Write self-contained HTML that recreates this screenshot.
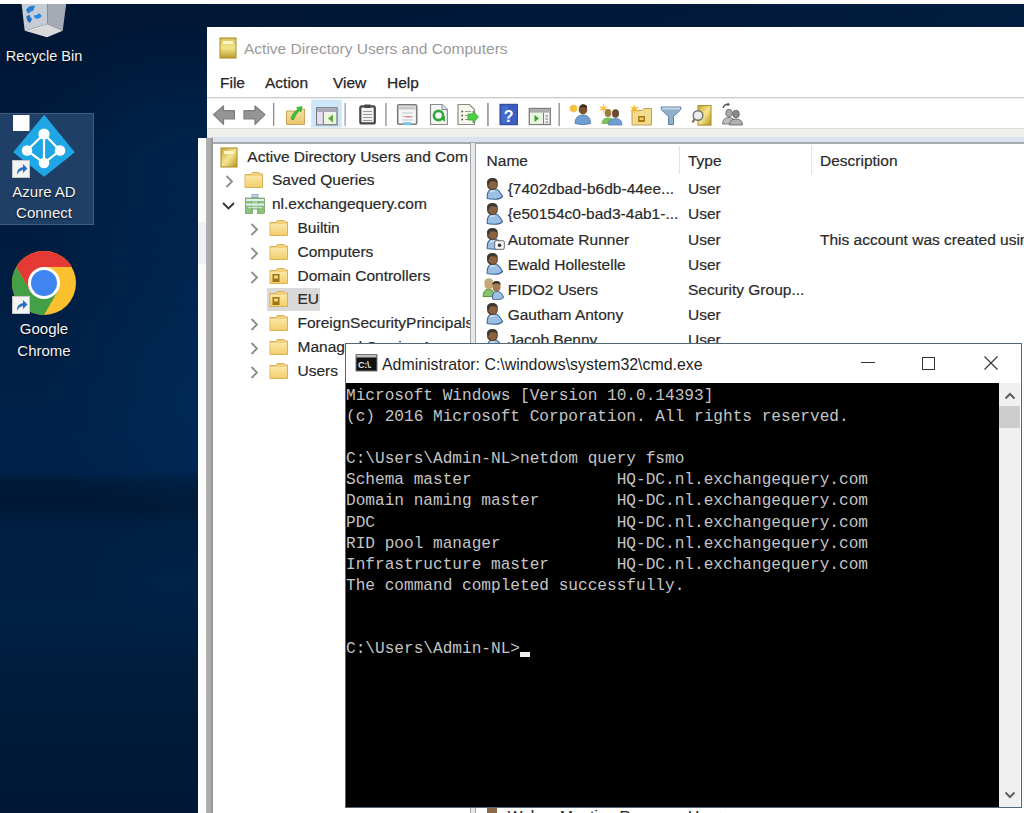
<!DOCTYPE html>
<html><head><meta charset="utf-8">
<style>
*{margin:0;padding:0;box-sizing:border-box}
html,body{width:1024px;height:813px;overflow:hidden}
body{position:relative;font-family:"Liberation Sans",sans-serif;background:#05193a}
.a{position:absolute}
#desk{left:0;top:0;width:1024px;height:813px;
 background:
  radial-gradient(ellipse 170px 140px at 210px 400px, rgba(0,50,100,0.5), rgba(0,50,100,0) 100%),
  radial-gradient(ellipse 160px 110px at 210px 290px, rgba(0,45,95,0.4), rgba(0,45,95,0) 100%),
  radial-gradient(ellipse 170px 150px at 190px 170px, rgba(0,45,95,0.5), rgba(0,45,95,0) 100%),
  radial-gradient(ellipse 100px 70px at 170px 580px, rgba(0,40,85,0.35), rgba(0,40,85,0) 100%),
  linear-gradient(180deg,#001634 0px,#001a3a 110px,#001d40 250px,#002046 360px,#00224b 470px,#001a37 484px,#001833 506px,#001e40 524px,#001f41 620px,#001b3a 720px,#001836 813px);}
#topstrip{left:0;top:0;width:1024px;height:4px;background:#fdfdfd}
.t{white-space:nowrap;line-height:20px}
.tr{font-size:15.5px;color:#2a2a2a;-webkit-text-stroke:0.2px #2a2a2a}
.con{font-family:"Liberation Mono",monospace;font-size:16.13px;line-height:21.1px;color:#c4c4c4;white-space:pre}
.menu{font-size:15.5px;color:#262626;-webkit-text-stroke:0.25px #262626}
.dtext{color:#f4f4f4;font-size:15px;text-align:center;text-shadow:0 1px 2px rgba(0,0,0,.9);line-height:22px}
</style></head><body>
<div id="desk" class="a"></div>
<div class="a" style="left:200px;top:0;width:824px;height:30px;background:linear-gradient(90deg,rgba(5,40,80,0) 0,rgba(5,40,80,0.35) 100%)"></div>
<div id="topstrip" class="a"></div>

<!-- Recycle bin -->
<svg class="a" style="left:20px;top:4px" width="50" height="36" viewBox="0 0 50 36">
 <path d="M1.6 0 L27.3 0 L27.3 20 L4.7 26.8 Z" fill="#c5ccd6"/>
 <path d="M27.3 0 L46.2 0 L42.7 26.8 L27.3 20 Z" fill="#a4abb4"/>
 <path d="M4.7 26.8 L27.3 20 L42.7 26.8 L27 33.3 Z" fill="#d9d9dc"/>
 <path d="M6 6 Q9 1 15 2 L13 7 Q10 6.5 8.5 10 Z" fill="#1f7fd6"/>
 <path d="M6.5 12 Q6 17 10 19 L12 15 Q9.5 13.5 10 11 Z" fill="#1a6fc8"/>
 <path d="M14.5 14 Q19 16 22 12 L19 9 Q17 12 14 11 Z" fill="#2a8ae0"/>
</svg>
<div class="a dtext" style="left:0;top:45px;width:88px;font-size:14.5px">Recycle Bin</div>

<!-- Azure AD selection -->
<div class="a" style="left:-1px;top:113px;width:95px;height:112px;background:#1f3f66;border:1px solid #3b5d86"></div>
<svg class="a" style="left:11px;top:113px" width="68" height="68" viewBox="0 0 68 68">
 <path d="M33.2 1.7 L63.8 39.2 L33.2 63.8 L2.2 39.2 Z" fill="#1fa6e4"/>
 <path d="M33 21 L33 50 M33 21 L16 37.5 L33 50 L49 37.5 Z" fill="none" stroke="#fff" stroke-width="2.2"/>
 <circle cx="33" cy="21" r="5.6" fill="#fff"/>
 <circle cx="16" cy="37.5" r="5.3" fill="#fff"/>
 <circle cx="49" cy="37.5" r="5.3" fill="#fff"/>
 <circle cx="33" cy="50" r="5.3" fill="#fff"/>
 <rect x="2" y="2" width="16.5" height="16" fill="#fff"/>
</svg>
<svg class="a" style="left:12px;top:160px" width="18" height="18" viewBox="0 0 18 18">
 <rect x=".5" y=".5" width="17" height="17" fill="#f4f4f4" stroke="#c8c8c8" stroke-width="1"/>
 <path d="M5 15 Q4.5 8 11 7 L11 4 L15.5 8.5 L11 13 L11 10 Q7 10.5 5 15 Z" fill="#2a6fc0"/>
</svg>
<div class="a dtext" style="left:0;top:181px;width:88px;line-height:21px">Azure AD<br>Connect</div>

<!-- Chrome -->
<svg class="a" style="left:11px;top:250px" width="66" height="66" viewBox="-33 -33 66 66">
 <defs><clipPath id="cc"><circle cx="0" cy="0" r="32"/></clipPath></defs>
 <circle cx="0" cy="0" r="32" fill="#fbc02d"/>
 <g clip-path="url(#cc)">
  <path d="M0 -16 L50 -16 L50 -62 L-54 -62 L-13.86 8 L0 0 Z" fill="#e53935"/>
  <path d="M-13.86 8 L-54 -62 L-62 80 L-26.14 77.3 L13.86 8 L0 0 Z" fill="#43a047"/>
 </g>
 <circle cx="0" cy="0" r="16" fill="#fff"/>
 <circle cx="0" cy="0" r="13" fill="#3f85f2"/>
</svg>
<svg class="a" style="left:12px;top:296px" width="18" height="18" viewBox="0 0 18 18">
 <rect x=".5" y=".5" width="17" height="17" fill="#f4f4f4" stroke="#c8c8c8" stroke-width="1"/>
 <path d="M5 15 Q4.5 8 11 7 L11 4 L15.5 8.5 L11 13 L11 10 Q7 10.5 5 15 Z" fill="#2a6fc0"/>
</svg>
<div class="a dtext" style="left:0;top:318px;width:88px">Google<br>Chrome</div>

<!-- ADUC window -->
<div id="aduc" class="a" style="left:207px;top:27px;width:817px;height:786px;background:#fff"></div>
<div class="a" style="left:198px;top:138px;width:9px;height:675px;background:#fdfdfd"></div>
<div class="a" style="left:198px;top:222px;width:8px;height:42px;background:#f0f1f3"></div>
<!-- title -->
<svg class="a" style="left:219px;top:37px" width="19" height="22" viewBox="0 0 19 22">
 <defs><linearGradient id="bk" x1="0" y1="0" x2="0" y2="1"><stop offset="0" stop-color="#d9c25a"/><stop offset=".5" stop-color="#f3e48c"/><stop offset="1" stop-color="#b89a2a"/></linearGradient></defs>
 <rect x="1" y="1" width="16" height="20" fill="url(#bk)" stroke="#a88a20" stroke-width="1"/>
 <rect x="4" y="4" width="10" height="3" fill="#fff6c8"/>
</svg>
<div class="a t" style="left:244px;top:39px;font-size:15.5px;color:#9a9a9a">Active Directory Users and Computers</div>
<!-- menu -->
<div class="a t menu" style="left:220px;top:73px">File</div>
<div class="a t menu" style="left:265px;top:73px">Action</div>
<div class="a t menu" style="left:333px;top:73px">View</div>
<div class="a t menu" style="left:387px;top:73px">Help</div>
<div class="a" style="left:207px;top:97px;width:817px;height:2px;background:linear-gradient(180deg,#cbcbcb 0,#cbcbcb 1px,#ececec 1px)"></div>
<!-- toolbar band -->
<div class="a" style="left:207px;top:128px;width:817px;height:15px;background:linear-gradient(180deg,#dcdcdc 0,#dcdcdc 1px,#eef0ec 1px,#edefec 8.5px,#dce2ee 9px,#dce2ee 15px)"></div>
<div class="a" style="left:213px;top:142px;width:811px;height:2px;background:#a6aaae"></div>
<div class="a" style="left:206px;top:138px;width:7px;height:675px;background:linear-gradient(90deg,#b0b0b0 0,#aaaaaa 5px,#909090 6px,#9a9a9a 7px)"></div>
<!-- toolbar icons -->
<svg class="a" style="left:207px;top:98px" width="560" height="30" viewBox="0 0 560 30">
 <defs>
  <linearGradient id="fold" x1="0" y1="0" x2="0" y2="1"><stop offset="0" stop-color="#f9e3a6"/><stop offset="1" stop-color="#e9c36c"/></linearGradient>
  <linearGradient id="gold" x1="0" y1="0" x2="1" y2="1"><stop offset="0" stop-color="#c9a832"/><stop offset=".5" stop-color="#f4e592"/><stop offset="1" stop-color="#b8961e"/></linearGradient>
 </defs>
 <!-- back -->
 <path d="M6.5 16.6 L16.5 8 L16.5 12.7 L27.4 12.7 L27.4 21 L16.5 21 L16.5 26.4 Z" fill="#959595" stroke="#7c7c7c" stroke-width="1.2" stroke-linejoin="round"/>
 <path d="M58 16.6 L48 8 L48 12.7 L37 12.7 L37 21 L48 21 L48 26.4 Z" fill="#959595" stroke="#7c7c7c" stroke-width="1.2" stroke-linejoin="round"/>
 <rect x="66" y="5" width="1.3" height="23" fill="#8a8a8a"/>
 <!-- up folder -->
 <path d="M79.5 13 L89 13 L91 11 L97.5 11 L97.5 26.5 L79.5 26.5 Z" fill="url(#fold)" stroke="#c9a45a" stroke-width="1"/>
 <path d="M84 21 C85 16 88 13 91 11.5 L89.5 9.5 L95 8.5 L94 14 L92.5 12.8 C90 15 88 18 86.5 22 Z" fill="#3fbf3a" stroke="#2a9a2a" stroke-width=".6"/>
 <!-- highlighted button -->
 <rect x="104.2" y="1.6" width="30.5" height="28" fill="#cde6f8"/>
 <rect x="109.7" y="9.8" width="20.3" height="17" fill="#f4f4f8" stroke="#6e6e78" stroke-width="1.2"/>
 <rect x="110.3" y="10.4" width="19.1" height="3.6" fill="#a8a8b4"/>
 <rect x="110.3" y="14" width="5.5" height="12.2" fill="#e6e0f0"/>
 <rect x="115.8" y="14" width="1" height="12.2" fill="#6e6e78"/>
 <rect x="117" y="15" width="12" height="11" fill="#eaf6e0"/>
 <path d="M126 16.5 L121 20.5 L126 24.5 Z" fill="#5daa3a"/>
 <rect x="137.5" y="5" width="1.3" height="23" fill="#a0a0a0"/>
 <!-- clipboard -->
 <rect x="153.3" y="8.4" width="14.5" height="17" rx="1.5" fill="#f2f2f2" stroke="#474747" stroke-width="2.2"/>
 <rect x="157.5" y="6.5" width="6" height="3.5" fill="#474747"/>
 <path d="M156 13.5h9 M156 16.5h9 M156 19.5h9 M156 22.5h9" stroke="#9a9a9a" stroke-width="1"/>
 <rect x="178.3" y="5" width="1.3" height="23" fill="#8a8a8a"/>
 <!-- properties -->
 <rect x="190.7" y="6.8" width="19" height="19.5" rx="1.5" fill="#f6f6f6" stroke="#7b7b7b" stroke-width="1.6"/>
 <rect x="192" y="8.5" width="16.5" height="3" fill="#c8c8c8"/>
 <path d="M195 15h11 M195 18.5h11 M195 22h11" stroke="#b9c6d6" stroke-width="1"/>
 <rect x="198.5" y="18" width="6" height="1.5" fill="#e08a8a"/>
 <rect x="196" y="24.2" width="8" height="3" fill="#7cc0e0"/>
 <!-- refresh -->
 <path d="M223.5 6.5 L235 6.5 L240.3 11.5 L240.3 26.5 L223.5 26.5 Z" fill="#f6f6f6" stroke="#8a8a8a" stroke-width="1.2"/>
 <path d="M235 6.5 L235 11.5 L240.3 11.5" fill="#e4e4e4" stroke="#8a8a8a" stroke-width="1"/>
 <circle cx="231.5" cy="17.5" r="4.6" fill="none" stroke="#2fa83a" stroke-width="2.6"/>
 <path d="M233.5 20 L238 24 L238 18 Z" fill="#2fa83a"/>
 <!-- export -->
 <path d="M251 6.5 L262.5 6.5 L267.5 11.5 L267.5 26.5 L251 26.5 Z" fill="#f9f6ea" stroke="#8a8a8a" stroke-width="1.2"/>
 <path d="M254.5 13.5h1.5 M254.5 17.5h1.5 M254.5 21.5h1.5" stroke="#333" stroke-width="1.5"/>
 <path d="M258 13.5h6 M258 17.5h4 M258 21.5h4" stroke="#9a9a9a" stroke-width="1"/>
 <path d="M261 16 L266 16 L266 13 L271.5 19 L266 25 L266 22 L261 22 Z" fill="#4fcf45" stroke="#2f9e2a" stroke-width=".7"/>
 <rect x="280.3" y="5" width="1.3" height="23" fill="#7a7a7a"/>
 <!-- help -->
 <rect x="293" y="6.3" width="17.4" height="20.4" fill="#3a5fc4" stroke="#24428f" stroke-width="1"/>
 <rect x="294.5" y="7.8" width="7" height="17.5" fill="#4f74d6" opacity=".6"/>
 <text x="301.7" y="23.5" font-family="Liberation Sans" font-weight="bold" font-size="16" fill="#fff" text-anchor="middle">?</text>
 <!-- window2 -->
 <rect x="322.3" y="10.5" width="21" height="16" fill="#f2f2f2" stroke="#7b7b7b" stroke-width="1.3"/>
 <rect x="323" y="11.2" width="19.6" height="3.4" fill="#a9a9a9"/>
 <rect x="323.5" y="15" width="12" height="11" fill="#e8f5de"/>
 <rect x="336" y="14.6" width="1" height="12" fill="#7b7b7b"/>
 <path d="M327.5 17 L332 20.5 L327.5 24 Z" fill="#3b9e3b"/>
 <path d="M338.5 18h2.5 M338.5 21h2.5 M338.5 24h2.5" stroke="#777" stroke-width="1"/>
 <rect x="351.5" y="5" width="1.3" height="23" fill="#8a8a8a"/>
 <!-- user new -->
 <circle cx="366.5" cy="10.5" r="3.5" fill="#f5b82e"/>
 <path d="M366.5 5.5 L367.5 9 L371 8 L368.5 10.5 L371 13 L367.5 12 L366.5 15.5 L365.5 12 L362 13 L364.5 10.5 L362 8 L365.5 9 Z" fill="#f8c440"/>
 <ellipse cx="376" cy="11.5" rx="4.3" ry="5" fill="#7a5230"/>
 <path d="M373 8 Q376 4.5 380 8 L380 10 Q376 8 372.5 10 Z" fill="#3a2a1a"/>
 <path d="M368 25.5 Q368 17 376 17 Q383.5 17 383.5 25.5 Q376 28 368 25.5 Z" fill="#6f9fd2" stroke="#4a76a8" stroke-width=".8"/>
 <!-- group new -->
 <path d="M396.5 5.5 L397.5 9 L401 8 L398.5 10.5 L401 13 L397.5 12 L396.5 15.5 L395.5 12 L392 13 L394.5 10.5 L392 8 L395.5 9 Z" fill="#f8c440"/>
 <ellipse cx="401" cy="15" rx="3.3" ry="4" fill="#a07a40"/>
 <path d="M394.5 26 Q394.5 19.5 401 19.5 Q406 19.5 407 24 L407 26 Z" fill="#7fbf5a"/>
 <ellipse cx="408.5" cy="15.5" rx="3.5" ry="4.2" fill="#6a4a2a"/>
 <path d="M401.5 27 Q401.5 20.5 408.5 20.5 Q415 20.5 415 27 Z" fill="#6f9fd2" stroke="#4a76a8" stroke-width=".7"/>
 <!-- OU new -->
 <path d="M425 12.5 L435 12.5 L437 10.5 L444.5 10.5 L444.5 27 L425 27 Z" fill="#f3dc90" stroke="#bfa050" stroke-width="1"/>
 <path d="M427.5 6.2 L428.5 9.5 L432 8.5 L429.5 11 L432 13.5 L428.5 12.5 L427.5 15.8 L426.5 12.5 L423 13.5 L425.5 11 L423 8.5 L426.5 9.5 Z" fill="#f8b838"/>
 <rect x="431" y="18" width="7" height="6" fill="#a57d10"/>
 <rect x="432.5" y="19.5" width="4" height="2.5" fill="#e9cf70"/>
 <!-- funnel -->
 <path d="M454.2 9 L473.8 9 L473.8 11.5 L466.5 18.5 L466.5 26.5 L461.5 26.5 L461.5 18.5 L454.2 11.5 Z" fill="#8fb0cc" stroke="#5f7f9c" stroke-width="1"/>
 <rect x="455" y="9.5" width="18" height="2" fill="#c5d8e8"/>
 <!-- find -->
 <rect x="491" y="7.6" width="13" height="19.5" fill="url(#gold)" stroke="#a88a20" stroke-width="1"/>
 <circle cx="491" cy="17.5" r="4.8" fill="#e8eef0" stroke="#707070" stroke-width="1.4"/>
 <path d="M487.5 21 L485.5 24.5" stroke="#8a6a2a" stroke-width="2"/>
 <!-- group gray -->
 <path d="M516 10 Q518 5.5 522 6.5" fill="none" stroke="#555" stroke-width="1.4"/>
 <path d="M521 4.5 L523 7 L520 8" fill="#555"/>
 <ellipse cx="522" cy="15" rx="3.3" ry="3.8" fill="#a9a9a9" stroke="#6a6a6a" stroke-width=".8"/>
 <path d="M515.5 26 Q515.5 19.5 522 19.5 Q527 19.5 528 24 L528 26 Z" fill="#bdbdbd" stroke="#6a6a6a" stroke-width=".8"/>
 <ellipse cx="529" cy="16" rx="3.3" ry="3.8" fill="#8a8a8a" stroke="#5a5a5a" stroke-width=".8"/>
 <path d="M522.5 27 Q522.5 21 529 21 Q535.5 21 535.5 27 Z" fill="#b0b0b0" stroke="#5a5a5a" stroke-width=".8"/>
</svg>
<!-- splitter -->
<div class="a" style="left:470px;top:143px;width:1px;height:670px;background:#a4a4a4"></div>
<div class="a" style="left:471px;top:143px;width:4px;height:670px;background:#e6eaef"></div>
<div class="a" style="left:475px;top:143px;width:1px;height:670px;background:#a4a4a4"></div>


<!-- tree -->
<div class="a" style="left:0;top:0;width:1024px;height:813px;clip-path:polygon(213px 144px,470px 144px,470px 813px,213px 813px)">
<svg width="0" height="0" style="position:absolute"><defs><linearGradient id="fg" x1="0" y1="0" x2="0" y2="1"><stop offset="0" stop-color="#fbe6a8"/><stop offset="1" stop-color="#f3cf6c"/></linearGradient></defs></svg>
<div class="a" style="left:266.5px;top:288px;width:53.5px;height:23px;background:#d9d9d9"></div>
<div class="a t tr" style="left:247.3px;top:146.6px">Active Directory Users and Com</div>
<svg class="a" style="left:220px;top:147.0px" width="19" height="21" viewBox="0 0 19 21"><rect x="1" y="1" width="16" height="19" fill="url(#gold)" stroke="#a88a20" stroke-width="1"/><rect x="4" y="4" width="10" height="3" fill="#fff6c8"/></svg>
<div class="a t tr" style="left:272px;top:170.4px">Saved Queries</div>
<svg class="a" style="left:225px;top:175.3px" width="9" height="13" viewBox="0 0 9 13"><path d="M1.5 1 L7 6.5 L1.5 12" fill="none" stroke="#8a8a8a" stroke-width="1.8"/></svg>
<svg class="a" style="left:244px;top:171.3px" width="20" height="18" viewBox="0 0 20 18"><path d="M1 3.5 L7 3.5 L8.5 1.5 L15 1.5 L16.5 3 L18.5 3 L18.5 16.5 L1 16.5 Z" fill="#f2d27a" stroke="#d4b25c" stroke-width="1"/><path d="M1.5 5 L18 5 L18 16 L1.5 16 Z" fill="url(#fg)"/></svg>
<div class="a t tr" style="left:272px;top:194.2px">nl.exchangequery.com</div>
<svg class="a" style="left:222px;top:201.6px" width="13" height="8" viewBox="0 0 13 8"><path d="M1 1 L6.5 6.5 L12 1" fill="none" stroke="#333" stroke-width="1.8"/></svg>
<svg class="a" style="left:245px;top:193.6px" width="20" height="20" viewBox="0 0 20 20">
 <rect x="7" y="0.5" width="6" height="3" fill="#bcd4e4" stroke="#6a8aa0" stroke-width=".6"/>
 <rect x="0.5" y="4" width="7" height="15.5" fill="#8fc07a" stroke="#5a8a50" stroke-width=".6"/>
 <rect x="12.5" y="4" width="7" height="15.5" fill="#8fc07a" stroke="#5a8a50" stroke-width=".6"/>
 <rect x="6.5" y="4" width="7" height="11" fill="#9dd088" stroke="#5a8a50" stroke-width=".6"/>
 <rect x="1" y="5" width="18" height="2" fill="#dfeef5"/>
 <rect x="1" y="9.5" width="18" height="2" fill="#dfeef5"/>
 <rect x="3" y="13" width="14" height="1.2" fill="#cfe3cf"/>
</svg>
<div class="a t tr" style="left:297.5px;top:218.0px">Builtin</div>
<svg class="a" style="left:250px;top:222.9px" width="9" height="13" viewBox="0 0 9 13"><path d="M1.5 1 L7 6.5 L1.5 12" fill="none" stroke="#8a8a8a" stroke-width="1.8"/></svg>
<svg class="a" style="left:269px;top:218.9px" width="20" height="18" viewBox="0 0 20 18"><path d="M1 3.5 L7 3.5 L8.5 1.5 L15 1.5 L16.5 3 L18.5 3 L18.5 16.5 L1 16.5 Z" fill="#f2d27a" stroke="#d4b25c" stroke-width="1"/><path d="M1.5 5 L18 5 L18 16 L1.5 16 Z" fill="url(#fg)"/></svg>
<div class="a t tr" style="left:297.5px;top:241.8px">Computers</div>
<svg class="a" style="left:250px;top:246.7px" width="9" height="13" viewBox="0 0 9 13"><path d="M1.5 1 L7 6.5 L1.5 12" fill="none" stroke="#8a8a8a" stroke-width="1.8"/></svg>
<svg class="a" style="left:269px;top:242.7px" width="20" height="18" viewBox="0 0 20 18"><path d="M1 3.5 L7 3.5 L8.5 1.5 L15 1.5 L16.5 3 L18.5 3 L18.5 16.5 L1 16.5 Z" fill="#f2d27a" stroke="#d4b25c" stroke-width="1"/><path d="M1.5 5 L18 5 L18 16 L1.5 16 Z" fill="url(#fg)"/></svg>
<div class="a t tr" style="left:297.5px;top:265.6px">Domain Controllers</div>
<svg class="a" style="left:250px;top:270.5px" width="9" height="13" viewBox="0 0 9 13"><path d="M1.5 1 L7 6.5 L1.5 12" fill="none" stroke="#8a8a8a" stroke-width="1.8"/></svg>
<svg class="a" style="left:269px;top:266.5px" width="20" height="18" viewBox="0 0 20 18"><path d="M1 3.5 L7 3.5 L8.5 1.5 L15 1.5 L16.5 3 L18.5 3 L18.5 16.5 L1 16.5 Z" fill="#f2d27a" stroke="#d4b25c" stroke-width="1"/><path d="M1.5 5 L18 5 L18 16 L1.5 16 Z" fill="url(#fg)"/><rect x="3.5" y="7" width="7" height="8" fill="#9c7410"/><rect x="5" y="8.5" width="4" height="3" fill="#f0d780"/></svg>
<div class="a t tr" style="left:297.5px;top:289.4px">EU</div>
<svg class="a" style="left:269px;top:290.3px" width="20" height="18" viewBox="0 0 20 18"><path d="M1 3.5 L7 3.5 L8.5 1.5 L15 1.5 L16.5 3 L18.5 3 L18.5 16.5 L1 16.5 Z" fill="#f2d27a" stroke="#d4b25c" stroke-width="1"/><path d="M1.5 5 L18 5 L18 16 L1.5 16 Z" fill="url(#fg)"/><rect x="3.5" y="7" width="7" height="8" fill="#9c7410"/><rect x="5" y="8.5" width="4" height="3" fill="#f0d780"/></svg>
<div class="a t tr" style="left:297.5px;top:313.2px">ForeignSecurityPrincipals</div>
<svg class="a" style="left:250px;top:318.1px" width="9" height="13" viewBox="0 0 9 13"><path d="M1.5 1 L7 6.5 L1.5 12" fill="none" stroke="#8a8a8a" stroke-width="1.8"/></svg>
<svg class="a" style="left:269px;top:314.1px" width="20" height="18" viewBox="0 0 20 18"><path d="M1 3.5 L7 3.5 L8.5 1.5 L15 1.5 L16.5 3 L18.5 3 L18.5 16.5 L1 16.5 Z" fill="#f2d27a" stroke="#d4b25c" stroke-width="1"/><path d="M1.5 5 L18 5 L18 16 L1.5 16 Z" fill="url(#fg)"/></svg>
<div class="a t tr" style="left:297.5px;top:337.0px">Managed Service Accounts</div>
<svg class="a" style="left:250px;top:341.9px" width="9" height="13" viewBox="0 0 9 13"><path d="M1.5 1 L7 6.5 L1.5 12" fill="none" stroke="#8a8a8a" stroke-width="1.8"/></svg>
<svg class="a" style="left:269px;top:337.9px" width="20" height="18" viewBox="0 0 20 18"><path d="M1 3.5 L7 3.5 L8.5 1.5 L15 1.5 L16.5 3 L18.5 3 L18.5 16.5 L1 16.5 Z" fill="#f2d27a" stroke="#d4b25c" stroke-width="1"/><path d="M1.5 5 L18 5 L18 16 L1.5 16 Z" fill="url(#fg)"/></svg>
<div class="a t tr" style="left:297.5px;top:360.8px">Users</div>
<svg class="a" style="left:250px;top:365.7px" width="9" height="13" viewBox="0 0 9 13"><path d="M1.5 1 L7 6.5 L1.5 12" fill="none" stroke="#8a8a8a" stroke-width="1.8"/></svg>
<svg class="a" style="left:269px;top:361.7px" width="20" height="18" viewBox="0 0 20 18"><path d="M1 3.5 L7 3.5 L8.5 1.5 L15 1.5 L16.5 3 L18.5 3 L18.5 16.5 L1 16.5 Z" fill="#f2d27a" stroke="#d4b25c" stroke-width="1"/><path d="M1.5 5 L18 5 L18 16 L1.5 16 Z" fill="url(#fg)"/></svg>
</div>
<!-- list -->
<div class="a" style="left:679px;top:146px;width:1px;height:28px;background:#e5e5e5"></div>
<div class="a" style="left:811px;top:146px;width:1px;height:28px;background:#e5e5e5"></div>
<div class="a t tr" style="left:486.6px;top:150.6px">Name</div>
<div class="a t tr" style="left:688px;top:150.6px">Type</div>
<div class="a t tr" style="left:820px;top:150.6px">Description</div>
<div class="a t tr" style="left:507.7px;top:179.2px">{7402dbad-b6db-44ee...</div>
<div class="a t tr" style="left:688px;top:179.2px">User</div>
<svg class="a" style="left:485px;top:177.6px" width="19" height="22" viewBox="0 0 19 22">
 <path d="M2.2 20.5 Q1.8 12.5 6.5 11 L11 11 Q14 12 17.6 18.5 Q15 21.2 10 21.2 Q4.5 21.2 2.2 20.5 Z" fill="#9cc0e4" stroke="#3d6594" stroke-width="1.1"/>
 <path d="M5 14 Q7 12.5 10 13" stroke="#d8e8f6" stroke-width="1.2" fill="none"/>
 <path d="M2.5 4 Q2.5 0.5 7.5 0.5 Q12.3 0.5 12.3 4.5 L12.3 7 Q12.3 11.5 7.5 11.5 Q2.5 11.5 2.5 7 Z" fill="#8a6242" stroke="#3c2c20" stroke-width=".8"/>
 <path d="M2.5 5 Q2.3 0.3 7.5 0.3 Q12.3 0.3 12.3 4.5 Q9 2.5 5 3.5 L3.5 7.5 Z" fill="#3a3632"/>
 <path d="M3.5 7.5 Q5 11 7.5 11.5 Q5 11.5 3 9 Z" fill="#5a3f28"/>
</svg>
<div class="a t tr" style="left:507.7px;top:204.4px">{e50154c0-bad3-4ab1-...</div>
<div class="a t tr" style="left:688px;top:204.4px">User</div>
<svg class="a" style="left:485px;top:202.8px" width="19" height="22" viewBox="0 0 19 22">
 <path d="M2.2 20.5 Q1.8 12.5 6.5 11 L11 11 Q14 12 17.6 18.5 Q15 21.2 10 21.2 Q4.5 21.2 2.2 20.5 Z" fill="#9cc0e4" stroke="#3d6594" stroke-width="1.1"/>
 <path d="M5 14 Q7 12.5 10 13" stroke="#d8e8f6" stroke-width="1.2" fill="none"/>
 <path d="M2.5 4 Q2.5 0.5 7.5 0.5 Q12.3 0.5 12.3 4.5 L12.3 7 Q12.3 11.5 7.5 11.5 Q2.5 11.5 2.5 7 Z" fill="#8a6242" stroke="#3c2c20" stroke-width=".8"/>
 <path d="M2.5 5 Q2.3 0.3 7.5 0.3 Q12.3 0.3 12.3 4.5 Q9 2.5 5 3.5 L3.5 7.5 Z" fill="#3a3632"/>
 <path d="M3.5 7.5 Q5 11 7.5 11.5 Q5 11.5 3 9 Z" fill="#5a3f28"/>
</svg>
<div class="a t tr" style="left:507.7px;top:229.5px">Automate Runner</div>
<div class="a t tr" style="left:688px;top:229.5px">User</div>
<div class="a t tr" style="left:820px;top:229.5px">This account was created using</div>
<svg class="a" style="left:485px;top:227.9px" width="19" height="22" viewBox="0 0 19 22">
 <path d="M2.2 20.5 Q1.8 12.5 6.5 11 L11 11 Q14 12 17.6 18.5 Q15 21.2 10 21.2 Q4.5 21.2 2.2 20.5 Z" fill="#9cc0e4" stroke="#3d6594" stroke-width="1.1"/>
 <path d="M5 14 Q7 12.5 10 13" stroke="#d8e8f6" stroke-width="1.2" fill="none"/>
 <path d="M2.5 4 Q2.5 0.5 7.5 0.5 Q12.3 0.5 12.3 4.5 L12.3 7 Q12.3 11.5 7.5 11.5 Q2.5 11.5 2.5 7 Z" fill="#8a6242" stroke="#3c2c20" stroke-width=".8"/>
 <path d="M2.5 5 Q2.3 0.3 7.5 0.3 Q12.3 0.3 12.3 4.5 Q9 2.5 5 3.5 L3.5 7.5 Z" fill="#3a3632"/>
 <path d="M3.5 7.5 Q5 11 7.5 11.5 Q5 11.5 3 9 Z" fill="#5a3f28"/>
</svg>
<svg class="a" style="left:494px;top:239.9px" width="11" height="10" viewBox="0 0 11 10"><rect x=".7" y=".7" width="9.6" height="8.6" rx="1.5" fill="#fafafa" stroke="#666" stroke-width="1"/><circle cx="5.5" cy="5.2" r="1.8" fill="#333"/></svg>
<div class="a t tr" style="left:507.7px;top:254.7px">Ewald Hollestelle</div>
<div class="a t tr" style="left:688px;top:254.7px">User</div>
<svg class="a" style="left:485px;top:253.1px" width="19" height="22" viewBox="0 0 19 22">
 <path d="M2.2 20.5 Q1.8 12.5 6.5 11 L11 11 Q14 12 17.6 18.5 Q15 21.2 10 21.2 Q4.5 21.2 2.2 20.5 Z" fill="#9cc0e4" stroke="#3d6594" stroke-width="1.1"/>
 <path d="M5 14 Q7 12.5 10 13" stroke="#d8e8f6" stroke-width="1.2" fill="none"/>
 <path d="M2.5 4 Q2.5 0.5 7.5 0.5 Q12.3 0.5 12.3 4.5 L12.3 7 Q12.3 11.5 7.5 11.5 Q2.5 11.5 2.5 7 Z" fill="#8a6242" stroke="#3c2c20" stroke-width=".8"/>
 <path d="M2.5 5 Q2.3 0.3 7.5 0.3 Q12.3 0.3 12.3 4.5 Q9 2.5 5 3.5 L3.5 7.5 Z" fill="#3a3632"/>
 <path d="M3.5 7.5 Q5 11 7.5 11.5 Q5 11.5 3 9 Z" fill="#5a3f28"/>
</svg>
<div class="a t tr" style="left:507.7px;top:279.9px">FIDO2 Users</div>
<div class="a t tr" style="left:688px;top:279.9px">Security Group...</div>
<svg class="a" style="left:482px;top:278.3px" width="23" height="22" viewBox="0 0 23 22">
 <path d="M1 18.5 Q1 11.5 6.5 11 Q11 11.5 12 15 L12 18.5 Z" fill="#86c070" stroke="#4f8a3a" stroke-width=".9"/>
 <path d="M2.5 4 Q2.5 0.5 6.8 0.5 Q11 0.5 11 4 L11 7 Q11 11 6.8 11 Q2.5 11 2.5 7 Z" fill="#c9a67a"/>
 <path d="M2.5 5 Q2.5 0.5 6.8 0.5 Q11 0.5 11 4 Q8 2.5 4.5 3.5 Z" fill="#b9b08a"/>
 <path d="M10.5 21 Q10 14.5 13.5 13.5 L16.5 13.5 Q20 14.5 21.8 19.5 Q19 21.8 15 21.8 Q12 21.8 10.5 21 Z" fill="#9cc0e4" stroke="#3d6594" stroke-width="1"/>
 <path d="M10.5 6.5 Q10.5 3 14.5 3 Q18.5 3 18.5 6.5 L18.5 9 Q18.5 13.5 14.5 13.5 Q10.5 13.5 10.5 9 Z" fill="#a37a55"/>
 <path d="M10.5 7 Q10.5 3 14.5 3 Q18.5 3 18.5 6.5 Q15 5 12 6 Z" fill="#3a3632"/>
</svg>
<div class="a t tr" style="left:507.7px;top:305.1px">Gautham Antony</div>
<div class="a t tr" style="left:688px;top:305.1px">User</div>
<svg class="a" style="left:485px;top:303.4px" width="19" height="22" viewBox="0 0 19 22">
 <path d="M2.2 20.5 Q1.8 12.5 6.5 11 L11 11 Q14 12 17.6 18.5 Q15 21.2 10 21.2 Q4.5 21.2 2.2 20.5 Z" fill="#9cc0e4" stroke="#3d6594" stroke-width="1.1"/>
 <path d="M5 14 Q7 12.5 10 13" stroke="#d8e8f6" stroke-width="1.2" fill="none"/>
 <path d="M2.5 4 Q2.5 0.5 7.5 0.5 Q12.3 0.5 12.3 4.5 L12.3 7 Q12.3 11.5 7.5 11.5 Q2.5 11.5 2.5 7 Z" fill="#8a6242" stroke="#3c2c20" stroke-width=".8"/>
 <path d="M2.5 5 Q2.3 0.3 7.5 0.3 Q12.3 0.3 12.3 4.5 Q9 2.5 5 3.5 L3.5 7.5 Z" fill="#3a3632"/>
 <path d="M3.5 7.5 Q5 11 7.5 11.5 Q5 11.5 3 9 Z" fill="#5a3f28"/>
</svg>
<div class="a t tr" style="left:507.7px;top:330.2px">Jacob Benny</div>
<div class="a t tr" style="left:688px;top:330.2px">User</div>
<svg class="a" style="left:485px;top:328.6px" width="19" height="22" viewBox="0 0 19 22">
 <path d="M2.2 20.5 Q1.8 12.5 6.5 11 L11 11 Q14 12 17.6 18.5 Q15 21.2 10 21.2 Q4.5 21.2 2.2 20.5 Z" fill="#9cc0e4" stroke="#3d6594" stroke-width="1.1"/>
 <path d="M5 14 Q7 12.5 10 13" stroke="#d8e8f6" stroke-width="1.2" fill="none"/>
 <path d="M2.5 4 Q2.5 0.5 7.5 0.5 Q12.3 0.5 12.3 4.5 L12.3 7 Q12.3 11.5 7.5 11.5 Q2.5 11.5 2.5 7 Z" fill="#8a6242" stroke="#3c2c20" stroke-width=".8"/>
 <path d="M2.5 5 Q2.3 0.3 7.5 0.3 Q12.3 0.3 12.3 4.5 Q9 2.5 5 3.5 L3.5 7.5 Z" fill="#3a3632"/>
 <path d="M3.5 7.5 Q5 11 7.5 11.5 Q5 11.5 3 9 Z" fill="#5a3f28"/>
</svg>
<div class="a t tr" style="left:507.7px;top:805.6px">Webex Meeting Room</div>
<div class="a t tr" style="left:688px;top:805.6px">User</div>
<div class="a" style="left:487px;top:808px;width:10px;height:5px;background:#8a6a48"></div>
<!-- cmd window -->
<div id="cmd" class="a" style="left:345px;top:343px;width:677px;height:465px;background:#fff;border:1px solid #4f6878"></div>
<svg class="a" style="left:355px;top:353px" width="23" height="19" viewBox="0 0 23 19">
 <rect x="1" y="1.5" width="21" height="16.5" fill="#111" stroke="#777" stroke-width="1"/>
 <rect x="1.5" y="2" width="20" height="2.5" fill="#bdbdbd"/>
 <text x="3" y="15" font-family="Liberation Sans" font-weight="bold" font-size="9" fill="#e6e6e6" letter-spacing="-.3">C:\.</text>
</svg>
<div class="a t" style="left:382px;top:355px;font-size:15.9px;color:#1e1e1e">Administrator: C:\windows\system32\cmd.exe</div>
<div class="a" style="left:861px;top:362px;width:14px;height:1px;background:#333"></div>
<div class="a" style="left:922px;top:356.5px;width:13px;height:13px;border:1px solid #333"></div>
<svg class="a" style="left:984px;top:356px" width="14" height="14" viewBox="0 0 14 14"><path d="M.5 .5 L13.5 13.5 M13.5 .5 L.5 13.5" stroke="#333" stroke-width="1.1"/></svg>
<div class="a" style="left:346px;top:383px;width:653px;height:424px;background:#000"></div>
<div class="a" style="left:999px;top:383px;width:21px;height:424px;background:#f0f0f0"></div>
<div class="a" style="left:999px;top:406px;width:21px;height:22px;background:#cdcdcd"></div>
<svg class="a" style="left:1004px;top:391px" width="12" height="9" viewBox="0 0 12 9"><path d="M1.5 7.5 L6 3 L10.5 7.5" fill="none" stroke="#606060" stroke-width="2"/></svg>
<svg class="a" style="left:1004px;top:791px" width="12" height="9" viewBox="0 0 12 9"><path d="M1.5 1.5 L6 6 L10.5 1.5" fill="none" stroke="#606060" stroke-width="2"/></svg>
<pre class="a con" style="left:346px;top:386px">Microsoft Windows [Version 10.0.14393]
(c) 2016 Microsoft Corporation. All rights reserved.

C:\Users\Admin-NL>netdom query fsmo
Schema master               HQ-DC.nl.exchangequery.com
Domain naming master        HQ-DC.nl.exchangequery.com
PDC                         HQ-DC.nl.exchangequery.com
RID pool manager            HQ-DC.nl.exchangequery.com
Infrastructure master       HQ-DC.nl.exchangequery.com
The command completed successfully.


C:\Users\Admin-NL&gt;</pre>
<div class="a" style="left:520px;top:652px;width:10px;height:5px;background:#f0f0f0"></div>

</body></html>
